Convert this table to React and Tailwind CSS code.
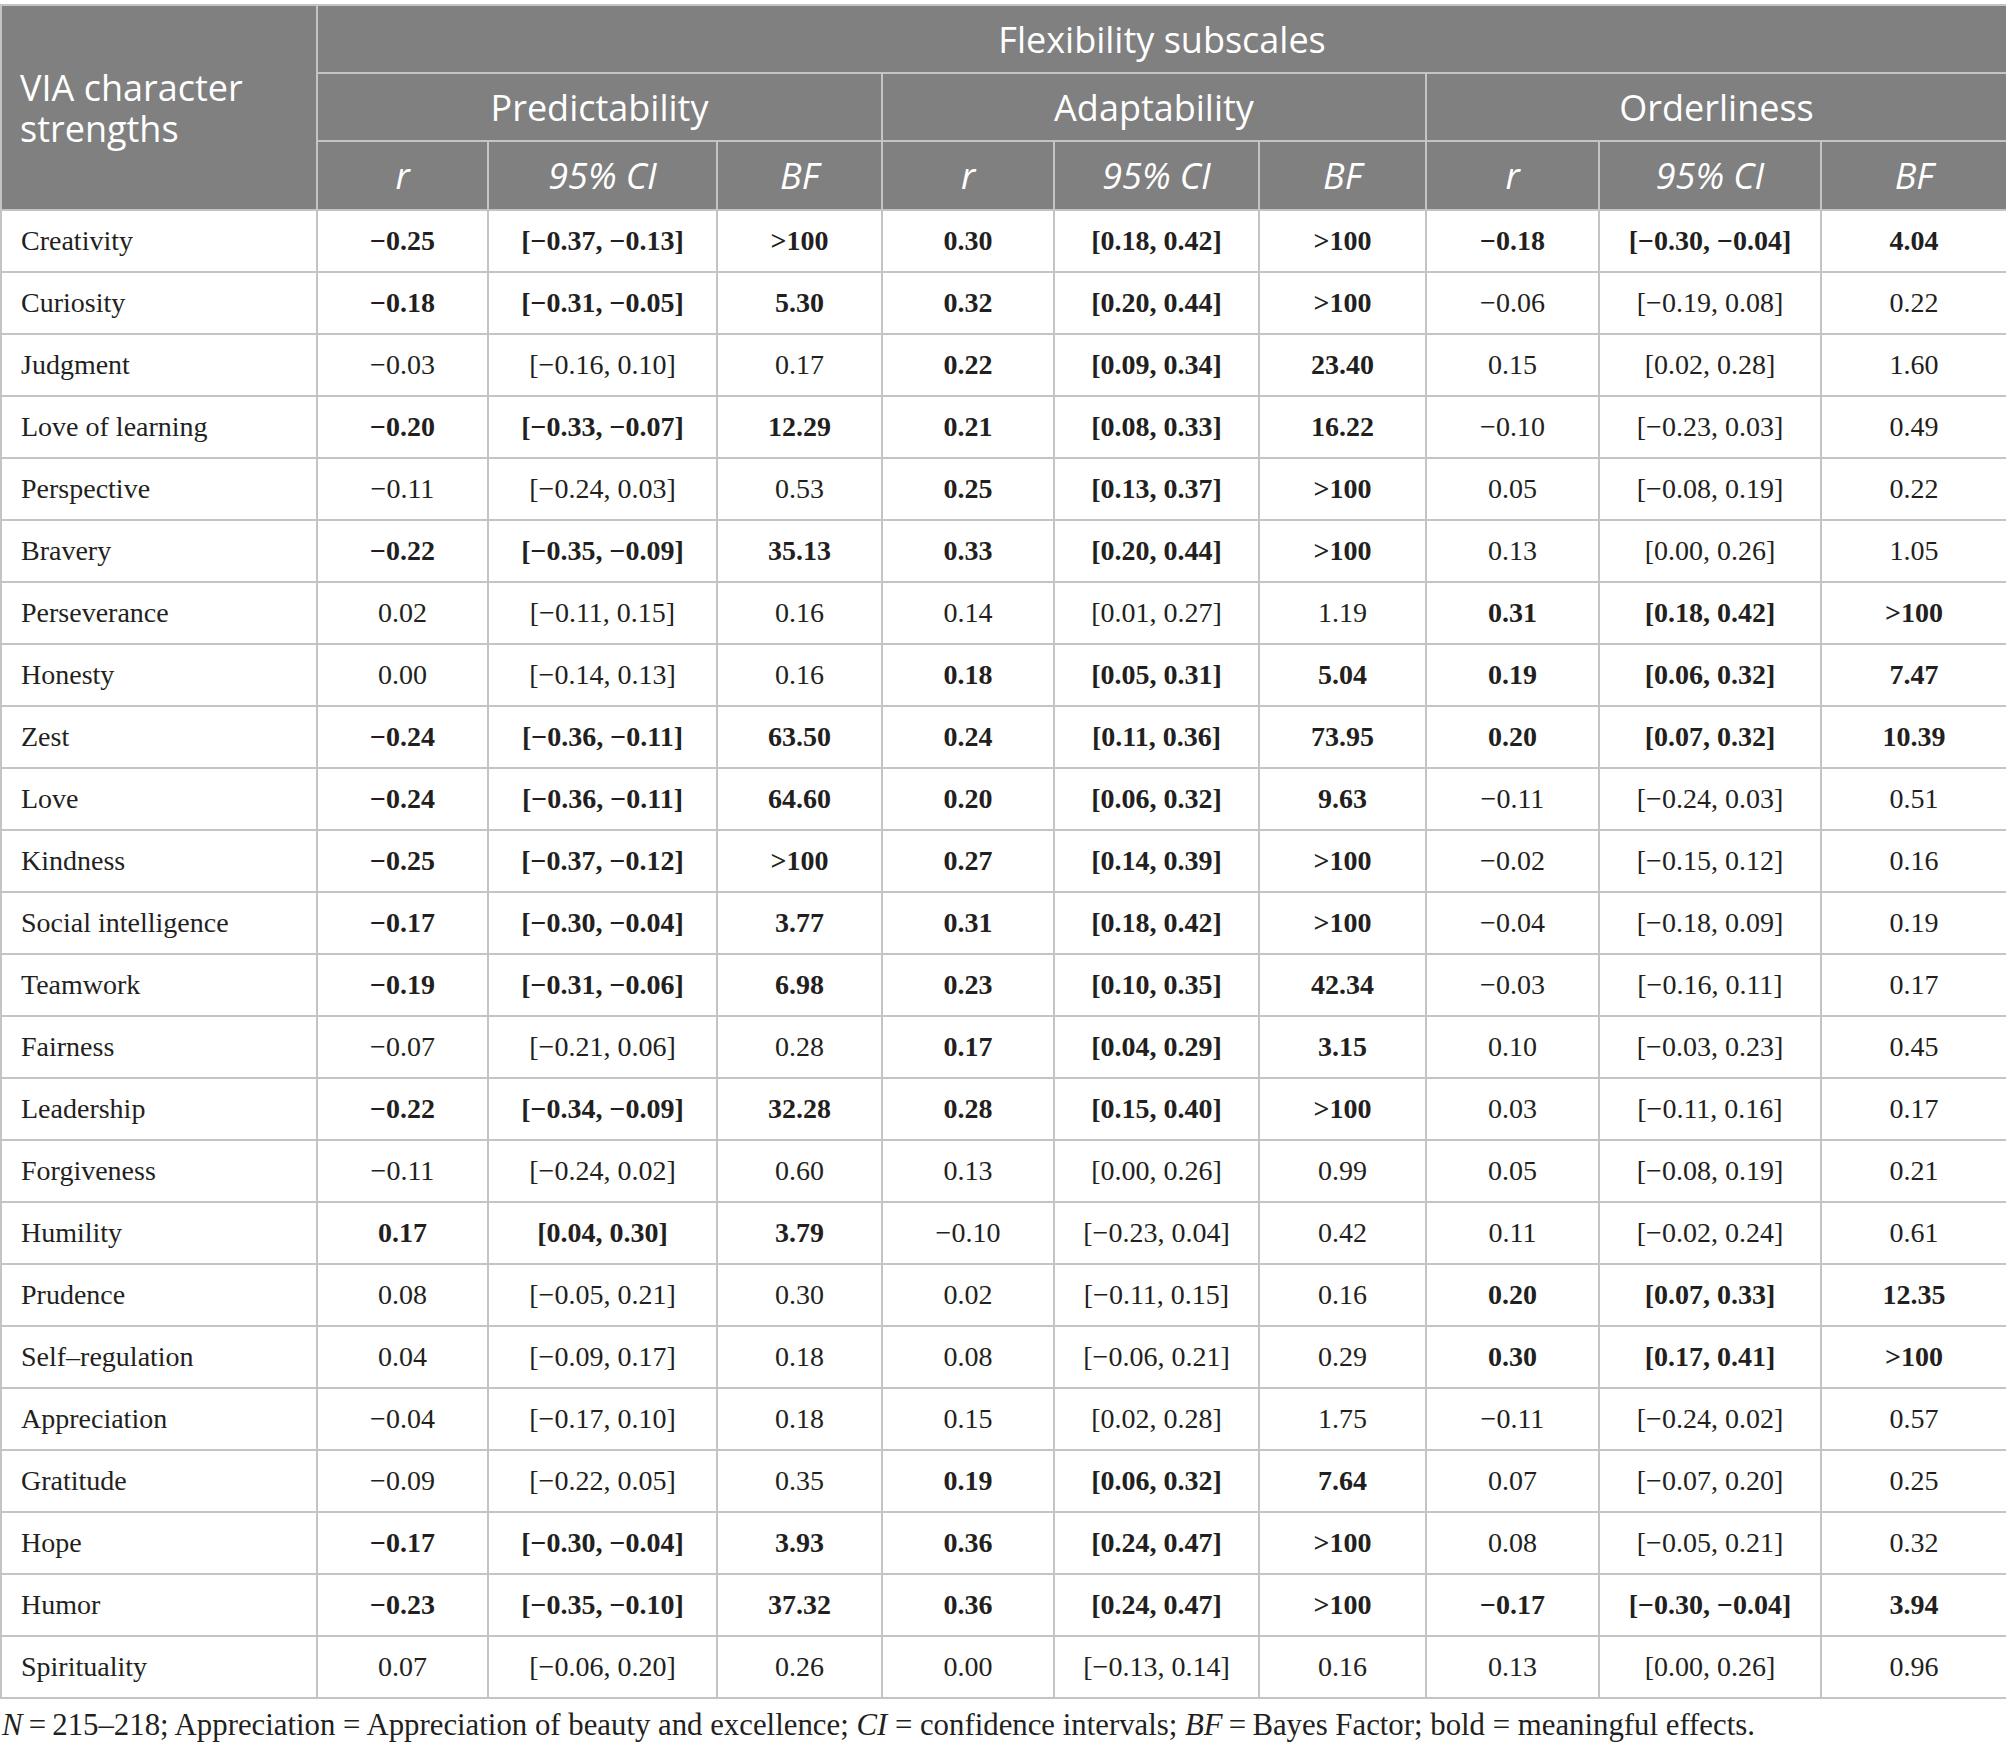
const rows = [
  ["Creativity", "111", "−0.25", "[−0.37, −0.13]", ">100", "0.30", "[0.18, 0.42]", ">100", "−0.18", "[−0.30, −0.04]", "4.04"],
  ["Curiosity", "110", "−0.18", "[−0.31, −0.05]", "5.30", "0.32", "[0.20, 0.44]", ">100", "−0.06", "[−0.19, 0.08]", "0.22"],
  ["Judgment", "010", "−0.03", "[−0.16, 0.10]", "0.17", "0.22", "[0.09, 0.34]", "23.40", "0.15", "[0.02, 0.28]", "1.60"],
  ["Love of learning", "110", "−0.20", "[−0.33, −0.07]", "12.29", "0.21", "[0.08, 0.33]", "16.22", "−0.10", "[−0.23, 0.03]", "0.49"],
  ["Perspective", "010", "−0.11", "[−0.24, 0.03]", "0.53", "0.25", "[0.13, 0.37]", ">100", "0.05", "[−0.08, 0.19]", "0.22"],
  ["Bravery", "110", "−0.22", "[−0.35, −0.09]", "35.13", "0.33", "[0.20, 0.44]", ">100", "0.13", "[0.00, 0.26]", "1.05"],
  ["Perseverance", "001", "0.02", "[−0.11, 0.15]", "0.16", "0.14", "[0.01, 0.27]", "1.19", "0.31", "[0.18, 0.42]", ">100"],
  ["Honesty", "011", "0.00", "[−0.14, 0.13]", "0.16", "0.18", "[0.05, 0.31]", "5.04", "0.19", "[0.06, 0.32]", "7.47"],
  ["Zest", "111", "−0.24", "[−0.36, −0.11]", "63.50", "0.24", "[0.11, 0.36]", "73.95", "0.20", "[0.07, 0.32]", "10.39"],
  ["Love", "110", "−0.24", "[−0.36, −0.11]", "64.60", "0.20", "[0.06, 0.32]", "9.63", "−0.11", "[−0.24, 0.03]", "0.51"],
  ["Kindness", "110", "−0.25", "[−0.37, −0.12]", ">100", "0.27", "[0.14, 0.39]", ">100", "−0.02", "[−0.15, 0.12]", "0.16"],
  ["Social intelligence", "110", "−0.17", "[−0.30, −0.04]", "3.77", "0.31", "[0.18, 0.42]", ">100", "−0.04", "[−0.18, 0.09]", "0.19"],
  ["Teamwork", "110", "−0.19", "[−0.31, −0.06]", "6.98", "0.23", "[0.10, 0.35]", "42.34", "−0.03", "[−0.16, 0.11]", "0.17"],
  ["Fairness", "010", "−0.07", "[−0.21, 0.06]", "0.28", "0.17", "[0.04, 0.29]", "3.15", "0.10", "[−0.03, 0.23]", "0.45"],
  ["Leadership", "110", "−0.22", "[−0.34, −0.09]", "32.28", "0.28", "[0.15, 0.40]", ">100", "0.03", "[−0.11, 0.16]", "0.17"],
  ["Forgiveness", "000", "−0.11", "[−0.24, 0.02]", "0.60", "0.13", "[0.00, 0.26]", "0.99", "0.05", "[−0.08, 0.19]", "0.21"],
  ["Humility", "100", "0.17", "[0.04, 0.30]", "3.79", "−0.10", "[−0.23, 0.04]", "0.42", "0.11", "[−0.02, 0.24]", "0.61"],
  ["Prudence", "001", "0.08", "[−0.05, 0.21]", "0.30", "0.02", "[−0.11, 0.15]", "0.16", "0.20", "[0.07, 0.33]", "12.35"],
  ["Self–regulation", "001", "0.04", "[−0.09, 0.17]", "0.18", "0.08", "[−0.06, 0.21]", "0.29", "0.30", "[0.17, 0.41]", ">100"],
  ["Appreciation", "000", "−0.04", "[−0.17, 0.10]", "0.18", "0.15", "[0.02, 0.28]", "1.75", "−0.11", "[−0.24, 0.02]", "0.57"],
  ["Gratitude", "010", "−0.09", "[−0.22, 0.05]", "0.35", "0.19", "[0.06, 0.32]", "7.64", "0.07", "[−0.07, 0.20]", "0.25"],
  ["Hope", "110", "−0.17", "[−0.30, −0.04]", "3.93", "0.36", "[0.24, 0.47]", ">100", "0.08", "[−0.05, 0.21]", "0.32"],
  ["Humor", "111", "−0.23", "[−0.35, −0.10]", "37.32", "0.36", "[0.24, 0.47]", ">100", "−0.17", "[−0.30, −0.04]", "3.94"],
  ["Spirituality", "000", "0.07", "[−0.06, 0.20]", "0.26", "0.00", "[−0.13, 0.14]", "0.16", "0.13", "[0.00, 0.26]", "0.96"],
];

const widths = ["w-[316px]", "w-[171px]", "w-[229px]", "w-[165px]", "w-[172px]", "w-[205px]", "w-[167px]", "w-[173px]", "w-[222px]", "w-[186px]"];

const head = "border-2 border-[#c4c4c4] bg-[#7f807f] text-center align-middle font-normal text-white";
const cell = "border-2 border-[#c4c4c4] text-center align-middle";

export default function App() {
  return (
    <div className="w-[2006px] bg-white pt-[4px] text-[#231f20]">
      <table className="w-[2006px] table-fixed border-collapse">
        <colgroup>
          {widths.map((w, i) => (
            <col key={i} className={w} />
          ))}
        </colgroup>
        <thead className="font-['Open_Sans',sans-serif] text-[36px] leading-[43px]">
          <tr className="h-[68px]">
            <th rowSpan={3} className={head + " px-[18px] text-left"}>
              <span className="block leading-[41px]">VIA character</span>
              <span className="block leading-[41px]">strengths</span>
            </th>
            <th colSpan={9} className={head}>Flexibility subscales</th>
          </tr>
          <tr className="h-[68px]">
            <th colSpan={3} className={head}>Predictability</th>
            <th colSpan={3} className={head}>Adaptability</th>
            <th colSpan={3} className={head}>Orderliness</th>
          </tr>
          <tr className="h-[69px] italic">
            {[0, 1, 2].map((g) => (
              <SubHeads key={g} />
            ))}
          </tr>
        </thead>
        <tbody className="font-['Liberation_Serif',serif] text-[28px]">
          {rows.map((r) => (
            <tr key={r[0]} className="h-[62px]">
              <td className={cell + " px-[19px] text-left"}>{r[0]}</td>
              {r.slice(2).map((v, i) => (
                <td key={i} className={cell + (r[1][Math.floor(i / 3)] === "1" ? " font-bold" : "")}>
                  {v}
                </td>
              ))}
            </tr>
          ))}
        </tbody>
      </table>
      <p className="mt-[8px] whitespace-nowrap pl-[2px] font-['Liberation_Serif',serif] text-[30.8px] leading-[36px]">
        <i>N</i>{"\u2009=\u2009"}215–218; Appreciation = Appreciation of beauty and excellence; <i>CI</i> = confidence intervals; <i>BF</i>{"\u2009=\u2009"}Bayes Factor; bold = meaningful effects.
      </p>
    </div>
  );
}

function SubHeads() {
  return (
    <>
      <th className={head + " italic"}>r</th>
      <th className={head + " italic"}>95% CI</th>
      <th className={head + " italic"}>BF</th>
    </>
  );
}
